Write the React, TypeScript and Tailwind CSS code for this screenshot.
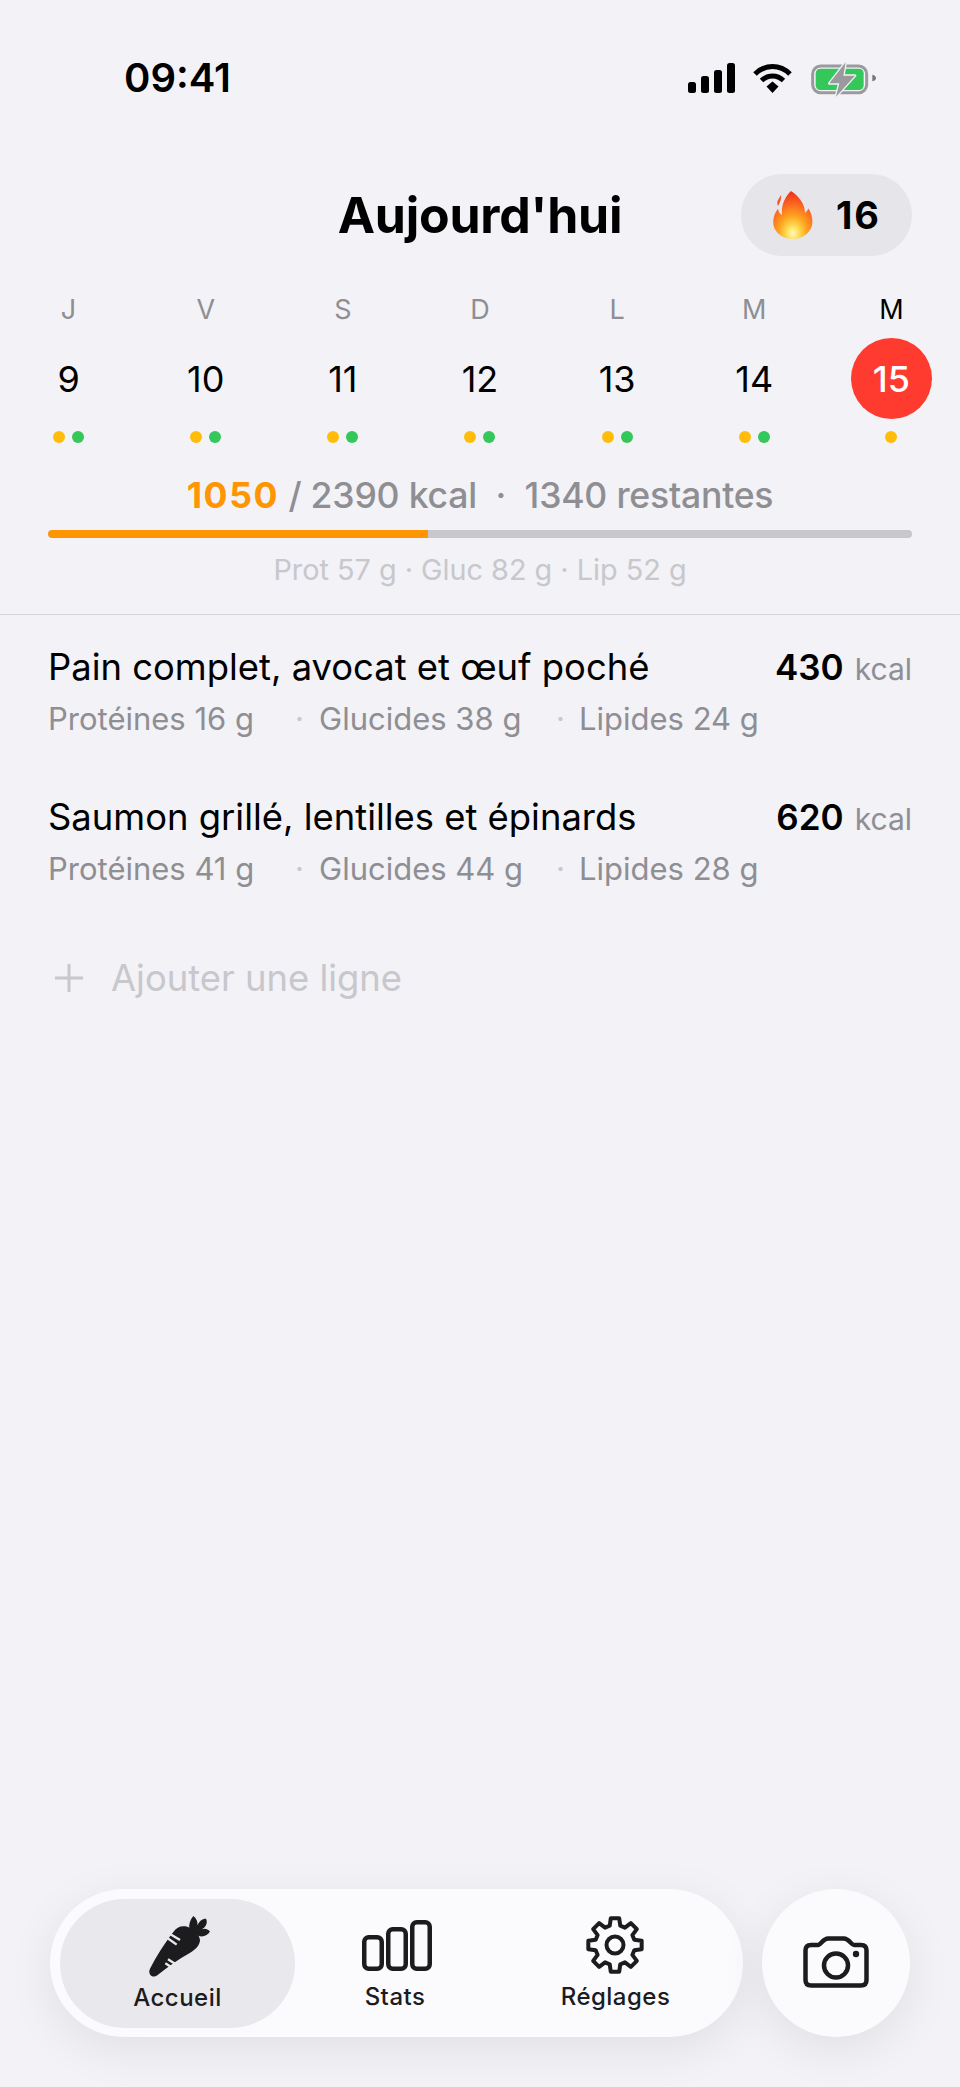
const days = [
    { letter: "J", num: 9, dots: 2 },
    { letter: "V", num: 10, dots: 2 },
    { letter: "S", num: 11, dots: 2 },
    { letter: "D", num: 12, dots: 2 },
    { letter: "L", num: 13, dots: 2 },
    { letter: "M", num: 14, dots: 2 },
    { letter: "M", num: 15, dots: 1, today: true },
];

const meals = [
    { title: "Pain complet, avocat et œuf poché", kcal: 430, prot: 16, gluc: 38, lip: 24 },
    { title: "Saumon grillé, lentilles et épinards", kcal: 620, prot: 41, gluc: 44, lip: 28 },
];

function gearPath(teeth: number, outer: number, inner: number) {
    const pts: string[] = [];
    const step = (Math.PI * 2) / teeth;
    for (let i = 0; i < teeth; i++) {
        const a = i * step - Math.PI / 2;
        const list: [number, number][] = [
            [inner, a - step * 0.34],
            [outer, a - step * 0.2],
            [outer, a + step * 0.2],
            [inner, a + step * 0.34],
        ];
        list.forEach(([r, t]) => pts.push(`${(30 + r * Math.cos(t)).toFixed(2)} ${(30 + r * Math.sin(t)).toFixed(2)}`));
    }
    return "M" + pts.join("L") + "Z";
}

function StatusIcons() {
    return (
        <div className="flex items-center gap-[18px]">
            <svg width="47" height="30" viewBox="0 0 47 30" fill="#000">
                <rect x="0" y="19" width="8" height="11" rx="2.5" />
                <rect x="13" y="13" width="8" height="17" rx="2.5" />
                <rect x="26" y="7" width="8" height="23" rx="2.5" />
                <rect x="39" y="0" width="8" height="30" rx="2.5" />
            </svg>
            <svg width="39" height="30" viewBox="0 0 39 30" fill="none" stroke="#000" strokeWidth="5">
                <path d="M2 11 C12 1 27 1 37 11" />
                <path d="M8.5 17.5 C15 11.5 24 11.5 30.5 17.5" />
                <path d="M13.5 23.5 L19.5 18.5 L25.5 23.5 L19.5 30 Z" fill="#000" stroke="none" />
            </svg>
            <svg width="65" height="40" viewBox="33 9 195 120" fill="none" className="ml-px">
                <rect x="38" y="33" width="162" height="80" rx="24" stroke="#9a9a9e" strokeWidth="9" />
                <rect x="47" y="41" width="144" height="64" rx="14" fill="#34c759" />
                <path d="M217 59 C225 61 228 65 228 69 C228 73 225 77 217 79 Z" fill="#77777c" />
                <path d="M137 22 L88 85 H118 L108 125 L165 62 H130 Z" fill="#9a9a9e" stroke="#f2f2f7" strokeWidth="8" strokeLinejoin="round" paintOrder="stroke" />
            </svg>
        </div>
    );
}

function Flame() {
    return (
        <svg width="40" height="48" viewBox="0 0 40 48">
            <defs>
                <radialGradient id="fl" cx="50%" cy="88%" r="85%">
                    <stop offset="0%" stopColor="#fff6c8" />
                    <stop offset="16%" stopColor="#ffe35c" />
                    <stop offset="42%" stopColor="#ffa51f" />
                    <stop offset="78%" stopColor="#fb5a20" />
                    <stop offset="100%" stopColor="#e8391d" />
                </radialGradient>
            </defs>
            <path
                d="M18 0 C27 6 32 14 32 22 C34 20 35 19 35.5 17.5 C39 23 40 29 39 34 C37.5 42 29 48 20 48 C10 48 2 42 .5 34 C-.5 28 2 21 5 18 C5.5 21 7 23 9 24 C8 14 12 6 18 0 Z"
                fill="url(#fl)"
            />
            <path d="M5 9 C6 7 7 6 8 4 C8.5 7 7.5 11 5 15 C4 13 4 11 5 9 Z" fill="#f4562a" />
        </svg>
    );
}

function Carrot() {
    return (
        <svg width="80" height="80" viewBox="0 0 240 240" fill="#1c1c1e" className="ml-[4px]">
            <path d="M30 188 C50 150 75 110 100 78 C110 62 125 58 142 62 C162 68 178 85 180 102 C180 118 165 132 148 142 C115 160 85 182 52 208 C38 218 22 205 30 188 Z" />
            <path d="M148 68 C146 55 150 42 160 30 C170 38 174 48 172 58 C178 46 186 38 198 38 C204 50 198 62 186 70 C194 66 202 68 210 76 C204 88 190 94 176 90 Z" />
            <g stroke="#e9e9ed" strokeWidth="7" fill="none">
                <path d="M82 96 L110 116" />
                <path d="M90 84 L120 102" />
                <path d="M84 160 L106 174" />
                <path d="M76 172 L98 186" />
            </g>
        </svg>
    );
}

function StatsIcon() {
    return (
        <svg width="70" height="51" viewBox="0 0 70 51" fill="none" stroke="#1c1c1e" strokeWidth="4.5" className="ml-[4px]">
            <rect x="2.25" y="17.25" width="17.5" height="31.5" rx="4.5" />
            <rect x="26.25" y="9.25" width="17.5" height="39.5" rx="4.5" />
            <rect x="50.25" y="2.25" width="17.5" height="46.5" rx="4.5" />
        </svg>
    );
}

function GearIcon() {
    return (
        <svg width="60" height="60" viewBox="0 0 60 60" fill="none" stroke="#1c1c1e" strokeWidth="4" strokeLinejoin="round" className="mr-[2px]">
            <path d={gearPath(8, 27, 20)} />
            <circle cx="30" cy="30" r="8.5" />
        </svg>
    );
}

function CameraIcon() {
    return (
        <svg width="66" height="52" viewBox="0 0 66 52" fill="none" stroke="#1c1c1e" strokeWidth="4.5" strokeLinejoin="round" className="mb-[3px]">
            <path d="M8 9 H15 C18 9 20 2.5 25 2.5 H41 C46 2.5 48 9 51 9 H58 C61.5 9 63.5 11 63.5 14.5 V44 C63.5 47.5 61.5 49.5 58 49.5 H8 C4.5 49.5 2.5 47.5 2.5 44 V14.5 C2.5 11 4.5 9 8 9 Z" />
            <circle cx="33" cy="29.5" r="12" />
            <circle cx="53" cy="18" r="3.2" fill="#1c1c1e" stroke="none" />
        </svg>
    );
}

export default function App() {
    return (
        <div className="flex flex-col min-h-[2087px] bg-[#f2f2f7] text-black font-['Inter',sans-serif]">
            {/* status bar */}
            <div className="flex items-center justify-between h-[156px] pl-[124px] pr-[84px]">
                <span className="text-[40px] font-semibold leading-none">09:41</span>
                <StatusIcons />
            </div>

            {/* header */}
            <div className="grid grid-cols-[1fr_auto_1fr] items-center mt-[18px] px-12">
                <div />
                <h1 className="text-[50px] font-bold leading-none tracking-[-0.005em]">Aujourd'hui</h1>
                <div className="justify-self-end flex items-center h-[82px] w-[171px] pl-[32px] gap-[23px] rounded-[41px] bg-[#e5e5ea]">
                    <Flame />
                    <span className="text-[38px] font-bold leading-none tracking-[0.05em]">16</span>
                </div>
            </div>

            {/* week */}
            <div className="grid grid-cols-7 mt-[36px]">
                {days.map((d) => (
                    <div key={d.num} className="flex flex-col items-center">
                        <span className={`h-[34px] flex items-center text-[27px] leading-none ${d.today ? "text-black" : "text-[#8e8e93]"}`}>
                            {d.letter}
                        </span>
                        <div
                            className={`mt-[12px] flex items-center justify-center w-[81px] h-[81px] rounded-full text-[36px] leading-none ${
                                d.today ? "bg-[#ff3b30] text-white font-medium" : ""
                            }`}
                        >
                            {d.num}
                        </div>
                        <div className="mt-[12px] flex items-center gap-[7px]">
                            <span className="w-3 h-3 rounded-full bg-[#ffbd0a]" />
                            {d.dots === 2 && <span className="w-3 h-3 rounded-full bg-[#34c759]" />}
                        </div>
                    </div>
                ))}
            </div>

            {/* daily summary */}
            <div className="mt-[31px] h-[44px] flex items-center justify-center text-[35.6px] font-medium text-[#8e8e93] whitespace-pre">
                <span className="font-bold text-[#ff9500] tracking-[0.045em]">1050</span>
                <span className="tracking-[-0.006em]"> / 2390 kcal  ·  1340 restantes</span>
            </div>
            <div className="mx-12 mt-[12px] h-2 rounded-full bg-[#c7c7cc] overflow-hidden">
                <div className="h-full w-[44%] rounded-l-full bg-[#ff9500]" />
            </div>
            <div className="mt-[14px] h-[36px] flex items-center justify-center text-[28.8px] text-[#c7c7cc]">
                Prot 57 g · Gluc 82 g · Lip 52 g
            </div>
            <div className="mt-[26px] h-px bg-[#d6d6da]" />

            {/* meals */}
            <div className="flex flex-col gap-[57px] mt-[30px] px-12">
                {meals.map((m) => (
                    <div key={m.title}>
                        <div className="flex items-center justify-between h-[44px]">
                            <span className="text-[36.4px] leading-none">{m.title}</span>
                            <span className="flex items-baseline gap-[11px]">
                                <span className="text-[35px] font-semibold leading-none">{m.kcal}</span>
                                <span className="text-[30px] leading-none text-[#8e8e93]">kcal</span>
                            </span>
                        </div>
                        <div className="flex items-center mt-[9px] h-[40px] text-[31px] leading-none text-[#8e8e93]">
                            <span className="w-[247px]">Protéines {m.prot} g</span>
                            <span className="w-[24px] text-[#c7c7cc]">·</span>
                            <span className="w-[237px]">Glucides {m.gluc} g</span>
                            <span className="w-[23px] text-[#c7c7cc]">·</span>
                            <span>Lipides {m.lip} g</span>
                        </div>
                    </div>
                ))}
            </div>

            {/* add line */}
            <div className="flex items-center gap-[28px] mt-[68px] h-[44px] pl-[55px] text-[36.4px] text-[#c7c7cc]">
                <svg width="28" height="28" viewBox="0 0 28 28" stroke="#c7c7cc" strokeWidth="3">
                    <path d="M14 0 V28 M0 14 H28" />
                </svg>
                <span>Ajouter une ligne</span>
            </div>

            <div className="flex-1" />

            {/* tab bar */}
            <div className="flex items-center gap-[19px] px-[50px] mb-[50px]">
                <nav className="flex items-center w-[693px] h-[148px] rounded-[74px] bg-[#fbfbfe] shadow-[0_12px_48px_rgba(0,0,0,0.08)] pl-[10px] text-[#1c1c1e]">
                    <div className="flex flex-col items-center w-[235px] h-[129px] pt-[7px] rounded-[65px] bg-[#e9e9ed]">
                        <Carrot />
                        <span className="text-[24px] font-medium leading-none tracking-[0.02em]">Accueil</span>
                    </div>
                    <div className="flex flex-col items-center w-[200px] h-full pt-[31px] gap-[14px]">
                        <StatsIcon />
                        <span className="text-[24px] font-medium leading-none tracking-[0.02em]">Stats</span>
                    </div>
                    <div className="flex flex-col items-center w-[241px] h-full pt-[26px] gap-[10px]">
                        <GearIcon />
                        <span className="text-[24px] font-medium leading-none tracking-[0.02em]">Réglages</span>
                    </div>
                </nav>
                <button className="flex items-center justify-center w-[148px] h-[148px] rounded-full bg-[#fbfbfe] shadow-[0_12px_48px_rgba(0,0,0,0.08)]">
                    <CameraIcon />
                </button>
            </div>
        </div>
    );
}
